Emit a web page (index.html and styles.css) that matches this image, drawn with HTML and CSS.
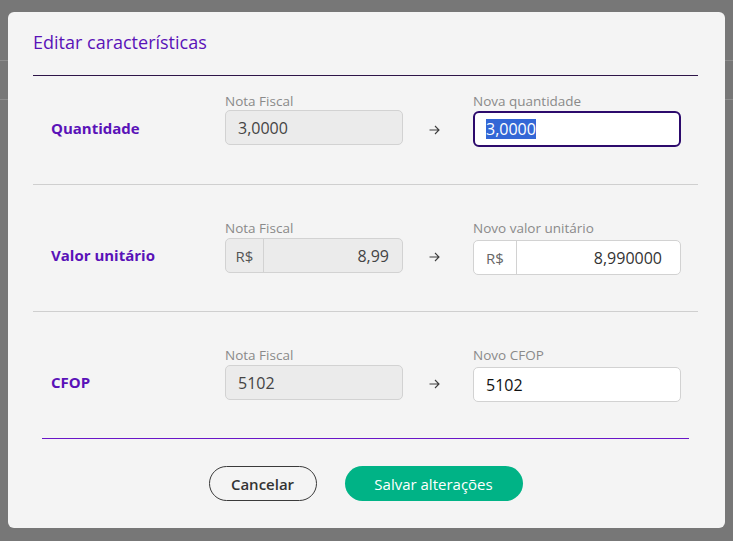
FILE: index.html
```html
<!DOCTYPE html>
<html lang="pt-BR">
<head>
<meta charset="utf-8">
<title>Editar características</title>
<link rel="stylesheet" href="styles.css">
</head>
<body>
<div class="page">
  <div class="page-row"></div>
  <div class="page-row"></div>
</div>
<div class="overlay">
  <div class="modal">
    <h2 class="modal-title">Editar características</h2>
    <div class="rows">
      <div class="row row-first">
        <div class="row-label">Quantidade</div>
        <div class="field">
          <span class="field-label">Nota Fiscal</span>
          <div class="input input-readonly"><span class="value">3,0000</span></div>
        </div>
        <div class="arrow"><svg width="11" height="10" viewBox="0 0 11 10"><path d="M0.5 5H10M6 1l4 4-4 4" fill="none" stroke="#3d3d3d" stroke-width="1.1"/></svg></div>
        <div class="field field-right">
          <span class="field-label">Nova quantidade</span>
          <div class="input input-edit input-focus"><span class="value selected">3,0000</span></div>
        </div>
      </div>
      <div class="row">
        <div class="row-label">Valor unitário</div>
        <div class="field">
          <span class="field-label">Nota Fiscal</span>
          <div class="input input-readonly input-group"><span class="prefix">R$</span><span class="value value-right">8,99</span></div>
        </div>
        <div class="arrow"><svg width="11" height="10" viewBox="0 0 11 10"><path d="M0.5 5H10M6 1l4 4-4 4" fill="none" stroke="#3d3d3d" stroke-width="1.1"/></svg></div>
        <div class="field field-right">
          <span class="field-label">Novo valor unitário</span>
          <div class="input input-edit input-group"><span class="prefix prefix-wide">R$</span><span class="value value-right value-dark">8,990000</span></div>
        </div>
      </div>
      <div class="row row-last">
        <div class="row-label">CFOP</div>
        <div class="field">
          <span class="field-label">Nota Fiscal</span>
          <div class="input input-readonly"><span class="value">5102</span></div>
        </div>
        <div class="arrow"><svg width="11" height="10" viewBox="0 0 11 10"><path d="M0.5 5H10M6 1l4 4-4 4" fill="none" stroke="#3d3d3d" stroke-width="1.1"/></svg></div>
        <div class="field field-right">
          <span class="field-label">Novo CFOP</span>
          <div class="input input-edit"><span class="value value-black">5102</span></div>
        </div>
      </div>
    </div>
    <div class="footer">
      <button class="btn btn-outline">Cancelar</button>
      <button class="btn btn-primary">Salvar alterações</button>
    </div>
  </div>
</div>
</body>
</html>
```
FILE: styles.css
```css
* { box-sizing: border-box; }
html, body { margin: 0; padding: 0; }
body {
  width: 733px;
  height: 541px;
  background: #777777;
  font-family: "Open Sans", "Noto Sans", "Liberation Sans", sans-serif;
  overflow: hidden;
  position: relative;
}
.page { padding-top: 60px; }
.page-row {
  height: 39px;
  border-top: 1px solid #8d8d8d;
}
.overlay {
  position: absolute;
  inset: 0;
  padding: 12px 8px 0 8px;
}
.modal {
  width: 717px;
  height: 516px;
  background: #f4f4f4;
  border-radius: 6px;
  padding: 18px 27px 0 25px;
  display: flex;
  flex-direction: column;
}
.modal-title {
  margin: 0;
  font-size: 18px;
  font-weight: 500;
  line-height: 24px;
  color: #5a12b8;
  padding-bottom: 21px;
  border-bottom: 1px solid #2e1548;
}
.rows { display: flex; flex-direction: column; }
.row {
  display: grid;
  grid-template-columns: 174px 178px 70px 208px;
  align-items: start;
  padding: 35px 0 36px 18px;
  border-bottom: 1px solid #cfcfcf;
}
.row-first { padding-top: 17px; padding-bottom: 37px; }
.row-last { border-bottom: none; padding-bottom: 36px; }
.row-label {
  font-size: 15px;
  font-weight: 700;
  line-height: 20px;
  color: #5a12b8;
  padding-top: 25px;
}
.field { display: flex; flex-direction: column; gap: 2px; }
.row-first .field { gap: 1px; }
.field-right, .row-first .field-right { gap: 4px; }
.field-label {
  font-size: 13.5px;
  line-height: 16px;
  color: #8a8a8a;
}
.input {
  height: 35px;
  border: 1px solid #d2d2d2;
  border-radius: 5px;
  display: flex;
  align-items: center;
  font-size: 16px;
  color: #444;
  padding: 0 12px;
}
.input-readonly { background: #ebebeb; }
.input-edit { background: #ffffff; }
.input-focus {
  border: 2px solid #2c0a6c;
  border-radius: 6px;
  padding: 0 11px;
  height: 36px;
  margin-top: -2px;
}
.input-group { padding: 0; }
.prefix {
  width: 38px;
  height: 100%;
  display: flex;
  align-items: center;
  justify-content: center;
  border-right: 1px solid #d2d2d2;
  color: #555;
  font-size: 15px;
}
.prefix-wide { width: 43px; color: #666; }
.value { line-height: 20px; }
.value-right { flex: 1; text-align: right; padding-right: 13px; }
.value-dark { color: #333; padding-right: 18px; }
.value-black { color: #111; }
.selected { background: #3367d6; color: #fff; }
.arrow {
  display: flex;
  justify-content: center;
  padding-top: 32px;
  padding-right: 8px;
}
.footer {
  margin: 0 9px;
  border-top: 1px solid #6a16c8;
  padding-top: 27px;
  display: flex;
  justify-content: center;
  gap: 28px;
}
.btn {
  height: 35px;
  border-radius: 18px;
  font-family: "Open Sans", "Noto Sans", sans-serif;
  font-size: 15px;
  padding: 0;
  cursor: pointer;
}
.btn-outline {
  background: #f4f4f4;
  border: 1px solid #3a3a3a;
  color: #333;
  font-weight: 600;
  width: 108px;
}
.btn-primary {
  background: #00b386;
  border: none;
  color: #fff;
  width: 178px;
}
```
